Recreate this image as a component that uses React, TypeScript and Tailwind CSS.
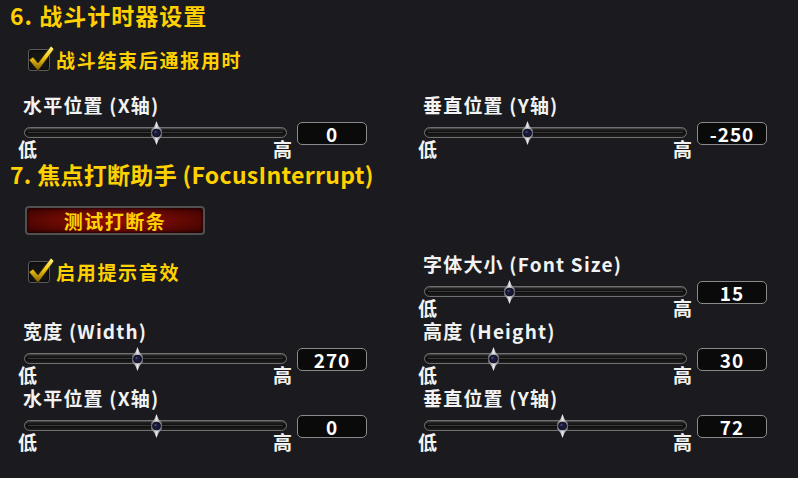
import React from "react";

const FONT = { fontFamily: '"Noto Sans CJK SC", "Noto Sans", sans-serif' };

function Check({ label }: { label: string }) {
  return (
    <div className="flex items-center h-[22px] ml-[28px]">
      <div className="relative shrink-0 w-[22px] h-[22px] rounded-[3px] border border-[#5b5b5b] bg-[#141414] shadow-[inset_0_0_3px_#000]">
        <svg className="absolute -top-[7px] -left-[2px]" width="28" height="30" viewBox="0 0 28 30">
          <defs>
            <linearGradient id="ck" x1="0" y1="0" x2="0" y2="1">
              <stop offset="0" stopColor="#fff48a" />
              <stop offset="0.45" stopColor="#f5c814" />
              <stop offset="1" stopColor="#7a5a00" />
            </linearGradient>
          </defs>
          <path d="M2 17 L6 14 L11 20 L24 3 L27 6 L11 28 Z" fill="url(#ck)" stroke="#2e2200" strokeWidth="0.7" />
        </svg>
      </div>
      <span className="ml-[6px] text-[19px] font-bold leading-[22px] tracking-[1.7px] text-[#ffd100]">{label}</span>
    </div>
  );
}

function Slider({ label, value, pos }: { label: string; value: string; pos: number }) {
  return (
    <div className="w-[400px] shrink-0 h-[67px]">
      <div className="h-[24px] pl-[5px] text-[19px] font-bold leading-[24px] tracking-[1.2px] text-[#f2f2f2]">{label}</div>
      <div className="flex items-start">
        <div className="w-[275px] shrink-0">
          <div className="relative mx-[6px] mt-[10px] h-[11px] rounded-full border border-[#707070] bg-gradient-to-b from-[#2c2c2c] via-[#0c0c0c] to-[#1e1e1e] shadow-[inset_0_1px_0_#444]">
            <div className="absolute left-[3px] right-[3px] top-[4px] h-px bg-[#3a3a3a]" />
            <div
              className="absolute -top-[7px] w-[11px] h-[24px] -ml-[5px] flex items-center justify-center"
              style={{ left: `${pos * 100}%` }}
            >
              <svg width="11" height="24" viewBox="0 0 11 24">
                <defs>
                  <linearGradient id="th" x1="0" y1="0" x2="1" y2="0">
                    <stop offset="0" stopColor="#5e5e66" />
                    <stop offset="0.5" stopColor="#e6e6ea" />
                    <stop offset="1" stopColor="#5e5e66" />
                  </linearGradient>
                </defs>
                <path d="M5.5 0 L7.5 5 L11 9 L11 15 L7.5 19 L5.5 24 L3.5 19 L0 15 L0 9 L3.5 5 Z" fill="url(#th)" />
                <circle cx="5.5" cy="12" r="4" fill="#1a1a38" stroke="#08081a" strokeWidth="0.8" />
                <circle cx="4.5" cy="11" r="1.1" fill="#4a4a86" />
              </svg>
            </div>
          </div>
          <div className="flex justify-between h-[20px] mt-[1px] text-[19px] font-bold leading-[19px] text-[#f2f2f2]">
            <span>低</span>
            <span className="mr-[1px]">高</span>
          </div>
        </div>
        <div className="ml-[4px] mt-[5px] w-[70px] h-[23px] rounded-[5px] border-[1.5px] border-[#8a8a8a] bg-[#0a0a0a] flex items-center justify-center text-[19px] font-bold leading-none tracking-[1px] text-white">
          {value}
        </div>
      </div>
    </div>
  );
}

export default function App() {
  return (
    <div className="w-[798px] h-[478px] overflow-hidden bg-[#1b1b1f]" style={FONT}>
      <div className="pl-[10px] pt-[1px] text-[23px] font-bold leading-[28px] tracking-[1px] text-[#ffd100]">6. 战斗计时器设置</div>
      <div className="mt-[20px]">
        <Check label="战斗结束后通报用时" />
      </div>
      <div className="mt-[22px] flex pl-[18px]">
        <Slider label="水平位置 (X轴)" value="0" pos={0.5} />
        <Slider label="垂直位置 (Y轴)" value="-250" pos={0.39} />
      </div>
      <div className="pl-[10px] h-[28px] text-[23px] font-bold leading-[28px] tracking-[0.3px] text-[#ffd100]">7. 焦点打断助手 (FocusInterrupt)</div>
      <div className="flex">
        <div className="w-[418px] shrink-0">
          <div className="mt-[18px] ml-[25px] w-[180px] h-[29px] rounded-[4px] border-2 border-[#505050] bg-[radial-gradient(ellipse_at_center,#920f06_0%,#640803_55%,#340201_100%)] shadow-[inset_0_0_3px_#000] flex items-center justify-center text-[19px] font-bold leading-none tracking-[1.5px] text-[#ffd100]">
            测试打断条
          </div>
          <div className="mt-[26px]">
            <Check label="启用提示音效" />
          </div>
        </div>
        <div className="mt-[64px]">
          <Slider label="字体大小 (Font Size)" value="15" pos={0.32} />
        </div>
      </div>
      <div className="flex pl-[18px]">
        <Slider label="宽度 (Width)" value="270" pos={0.43} />
        <Slider label="高度 (Height)" value="30" pos={0.26} />
      </div>
      <div className="flex pl-[18px]">
        <Slider label="水平位置 (X轴)" value="0" pos={0.5} />
        <Slider label="垂直位置 (Y轴)" value="72" pos={0.525} />
      </div>
    </div>
  );
}
